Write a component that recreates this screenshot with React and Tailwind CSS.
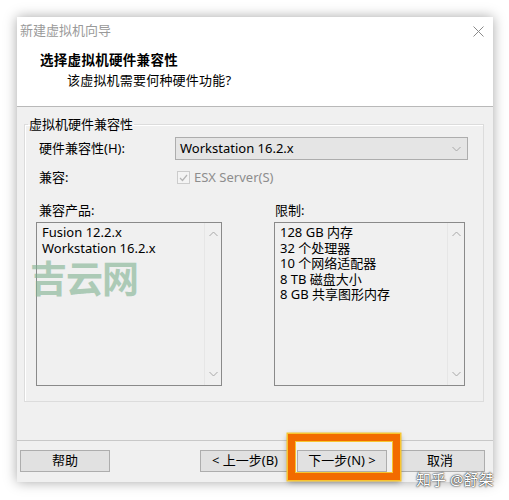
import React from 'react';

const font = { fontFamily: '"Noto Sans", "Noto Sans CJK SC", sans-serif' };

const Chevron = ({ up }) => (
  <svg width="9" height="6" viewBox="0 0 9 6" className="block">
    <path d={up ? 'M0.5 5 L4.5 1 L8.5 5' : 'M0.5 1 L4.5 5 L8.5 1'} fill="none" stroke="#a8a8a8" strokeWidth="1" />
  </svg>
);

const ListBox = ({ items, width }) => (
  <div className={`flex h-[164px] border border-[#8a8a8a] bg-[#f0f0f0] ${width}`}>
    <div className="flex-1 pl-[5px] pt-[2px] text-[13px] text-black">
      {items.map((t) => (
        <div key={t} className="h-[15.5px] leading-[15.5px]">{t}</div>
      ))}
    </div>
    <div className="flex w-[17px] flex-col items-center justify-between border-l border-[#e6e6e6] py-[8px]">
      <Chevron up />
      <Chevron />
    </div>
  </div>
);

const Btn = ({ children, className = '' }) => (
  <div className={`flex h-[22px] w-[90px] items-center justify-center border border-[#adadad] bg-[#e1e1e1] text-[13px] text-black ${className}`}>
    {children}
  </div>
);

export default function App() {
  return (
    <div className="relative h-[500px] w-[509px] overflow-hidden bg-white" style={font}>
      <div className="ml-[17px] mt-[17px] flex h-[465px] w-[476px] flex-col bg-white shadow-[0_0_12px_rgba(0,0,0,0.35)]">
        {/* title bar */}
        <div className="flex h-[28px] items-center justify-between pl-[3px] pr-[9px]">
          <span className="text-[13px] text-[#9a9a9a]">新建虚拟机向导</span>
          <svg width="11" height="11" viewBox="0 0 11 11">
            <path d="M0.5 0.5 L10.5 10.5 M10.5 0.5 L0.5 10.5" stroke="#8a8a8a" strokeWidth="1" />
          </svg>
        </div>

        {/* header */}
        <div className="h-[62px] border-b border-[#b9b9b9] pl-[23px] pt-[6px]">
          <div className="text-[13.5px] font-bold leading-[19px] tracking-[0.3px] text-black">选择虚拟机硬件兼容性</div>
          <div className="pl-[27px] text-[13px] leading-[20px] tracking-[0.2px] text-black">该虚拟机需要何种硬件功能?</div>
        </div>

        {/* body */}
        <div className="relative flex-1 bg-[#f0f0f0] pt-[9px]">
          <fieldset className="ml-[7px] mr-[9px] h-[286px] border border-[#dcdcdc] shadow-[inset_1px_1px_0_#ffffff]">
            <legend className="ml-[3px] px-[1px] text-[13px] leading-[17px] text-black">虚拟机硬件兼容性</legend>

            <div className="mt-[4px] flex h-[23px] items-center pl-[14px]">
              <span className="w-[136px] text-[13px] text-black">硬件兼容性(H):</span>
              <div className="flex h-[23px] w-[293px] items-center justify-between border border-[#adadad] bg-[#e5e5e5] pl-[4px] pr-[6px]">
                <span className="text-[13px] text-black">Workstation 16.2.x</span>
                <Chevron />
              </div>
            </div>

            <div className="mt-[10px] flex h-[15px] items-center pl-[14px]">
              <span className="w-[138px] text-[13px] text-black">兼容:</span>
              <div className="flex h-[13px] w-[13px] items-center justify-center border border-[#cccccc] bg-[#f4f4f4]">
                <svg width="9" height="8" viewBox="0 0 9 8">
                  <path d="M1 4 L3.5 6.5 L8 1" fill="none" stroke="#b5b5b5" strokeWidth="1.2" />
                </svg>
              </div>
              <span className="ml-[4px] text-[13px] text-[#8d8d8d]">ESX Server(S)</span>
            </div>

            <div className="mt-[17px] flex gap-[52px] pl-[11px]">
              <div className="flex flex-col">
                <span className="h-[17px] pl-[3px] text-[13px] leading-[17px] text-black">兼容产品:</span>
                <div className="mt-[3px]">
                  <ListBox width="w-[186px]" items={['Fusion 12.2.x', 'Workstation 16.2.x']} />
                </div>
              </div>
              <div className="flex flex-col">
                <span className="h-[17px] pl-[1px] text-[13px] leading-[17px] text-black">限制:</span>
                <div className="mt-[3px]">
                  <ListBox
                    width="w-[191px]"
                    items={['128 GB 内存', '32 个处理器', '10 个网络适配器', '8 TB 磁盘大小', '8 GB 共享图形内存']}
                  />
                </div>
              </div>
            </div>
          </fieldset>
        </div>

        {/* footer */}
        <div className="flex h-[42px] items-start border-t border-[#c8c8c8] bg-[#f0f0f0] pl-[3px] pr-[8px] pt-[9px]">
          <Btn>帮助</Btn>
          <div className="flex-1" />
          <Btn>&lt; 上一步(B)</Btn>
          <Btn className="ml-[7px]">下一步(N) &gt;</Btn>
          <Btn className="ml-[8px]">取消</Btn>
        </div>
      </div>

      {/* highlight around next button */}
      <div className="absolute left-[288px] top-[434px] h-[46px] w-[112px] border-[7px] border-[#f26b00] shadow-[0_0_0_1.5px_#f7c531,inset_0_0_0_1px_#f7c531,0_2px_6px_rgba(0,0,0,0.4)]" />

      {/* watermarks */}
      <div className="pointer-events-none absolute left-[30px] top-[259px] text-[37px] font-bold leading-[40px] tracking-[-1px] text-[#7fb291] opacity-60">
        吉云网
      </div>
      <div className="pointer-events-none absolute left-[416px] top-[469px] text-[15px] leading-[20px] text-white [text-shadow:0_0_2px_rgba(0,0,0,0.9),0_0_1px_rgba(0,0,0,0.8)]">
        知乎 @舒桀
      </div>
    </div>
  );
}
